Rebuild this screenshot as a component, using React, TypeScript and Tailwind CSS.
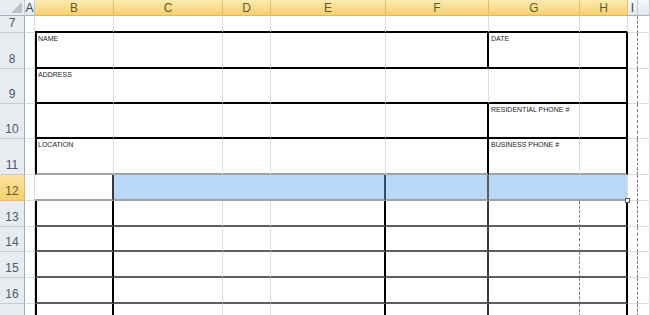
import React from "react";

const R_THIN = "border-r border-r-[#dadcdd]";
const R_THICK = "border-r-2 border-r-black";
const R_DARK = "border-r-2 border-r-[#3a3a3a]";
const R_BLUEDARK = "border-r-2 border-r-[#2f4d6e]";
const R_GRAYDARK = "border-r-2 border-r-[#5a6068]";
const R_DASH = "border-r border-r-[#7a7a7a] [border-right-style:dashed]";
const B_THIN = "border-b border-b-[#dadcdd]";
const B_THICK = "border-b-2 border-b-black";
const B_GRAY = "border-b-2 border-b-[#a2a2a2]";
const B_MED = "border-b-2 border-b-[#5e5e5e]";
const L_THICK = "border-l-2 border-l-black";
const SEL = "bg-[#bad8f8]";

type Cell = { r?: string; b?: string; l?: string; bg?: string; label?: string; pad?: string; handle?: boolean };

const COLS = ["A", "B", "C", "D", "E", "F", "G", "H", "I", "J"];

function makeRow(overrides: Record<string, Cell>): Cell[] {
  return COLS.map((c) => {
    const base: Cell = { r: R_THIN, b: B_THIN };
    if (c === "I") base.r = R_DASH;
    return { ...base, ...(overrides[c] || {}) };
  });
}

const boxB = (b: string) => ({ B: { b }, C: { b }, D: { b }, E: { b }, F: { b }, G: { b }, H: { b } });

function merge(a: Record<string, Cell>, b: Record<string, Cell>) {
  const out: Record<string, Cell> = { ...a };
  Object.keys(b).forEach((k) => {
    out[k] = { ...(out[k] || {}), ...b[k] };
  });
  return out;
}

const rows: { n: number; sel?: boolean; cells: Cell[] }[] = [
  { n: 7, cells: makeRow(boxB(B_THICK)) },
  {
    n: 8,
    cells: makeRow(
      merge(boxB(B_THICK), {
        B: { l: L_THICK, label: "NAME", pad: "pl-[1px]" },
        F: { r: R_THICK },
        G: { label: "DATE", pad: "pl-[2px]" },
        H: { r: R_THICK },
      })
    ),
  },
  {
    n: 9,
    cells: makeRow(
      merge(boxB(B_THICK), {
        B: { l: L_THICK, label: "ADDRESS", pad: "pl-[1px]" },
        H: { r: R_THICK },
      })
    ),
  },
  {
    n: 10,
    cells: makeRow(
      merge(boxB(B_THICK), {
        B: { l: L_THICK },
        F: { r: R_THICK },
        G: { label: "RESIDENTIAL PHONE #", pad: "pl-[2px]" },
        H: { r: R_THICK },
      })
    ),
  },
  {
    n: 11,
    cells: makeRow(
      merge(boxB(B_GRAY), {
        B: { l: L_THICK, label: "LOCATION", pad: "pl-[1px]" },
        F: { r: R_THICK },
        G: { label: "BUSINESS PHONE #", pad: "pl-[2px]" },
        H: { r: R_THICK },
      })
    ),
  },
  {
    n: 12,
    sel: true,
    cells: makeRow(
      merge(boxB(B_GRAY), {
        B: { r: R_DARK },
        C: { bg: SEL, r: "" },
        D: { bg: SEL, r: "" },
        E: { bg: SEL, r: R_BLUEDARK },
        F: { bg: SEL, r: R_GRAYDARK },
        G: { bg: SEL, r: "" },
        H: { bg: SEL, handle: true },
      })
    ),
  },
  ...[13, 14, 15, 16, 17].map((n) => ({
    n,
    cells: makeRow(
      merge(boxB(B_MED), {
        B: { l: L_THICK, r: R_THICK },
        E: { r: R_THICK },
        F: { r: R_DARK },
        G: { r: R_DASH },
        H: { r: R_THICK },
      })
    ),
  })),
];

const HDR_SEL =
  "bg-linear-to-b from-[#fcebb0] to-[#f6d06f] border-r border-r-[#e4bd66] border-b border-b-[#eab54a] text-[#67592a]";
const HDR =
  "bg-linear-to-b from-[#f7f9fb] to-[#e2e7ee] border-r border-r-[#c3cad4] border-b border-b-[#a7b1bf] text-[#3d4759]";

export default function App() {
  const headers: { t: string; sel: boolean }[] = [
    { t: "A", sel: false },
    { t: "B", sel: true },
    { t: "C", sel: true },
    { t: "D", sel: true },
    { t: "E", sel: true },
    { t: "F", sel: true },
    { t: "G", sel: true },
    { t: "H", sel: true },
    { t: "I", sel: false },
    { t: "", sel: false },
  ];
  return (
    <div
      className="w-[650px] h-[315px] overflow-hidden bg-white"
      style={{ fontFamily: '"Liberation Sans", Arial, sans-serif' }}
    >
      <div className="grid grid-cols-[25px_10px_79px_109px_48px_115px_103px_91px_48px_10px_12px] grid-rows-[16px_17px_36px_35px_35px_36px_26px_26px_25px_26px_26px_26px]">
        <div className="relative bg-[#e9edf2] border-r border-r-[#c3cad4] border-b border-b-[#a7b1bf]">
          <div className="absolute right-[2px] bottom-[2px] w-0 h-0 border-l-[11px] border-l-transparent border-b-[11px] border-b-[#b9c0ca]" />
        </div>
        {headers.map((h, i) => (
          <div
            key={i}
            className={`flex items-center justify-center text-[12px] leading-none ${h.sel ? HDR_SEL : HDR}`}
          >
            {h.t}
          </div>
        ))}
        {rows.map((row) => (
          <React.Fragment key={row.n}>
            <div
              className={
                row.sel
                  ? "flex items-end justify-center pb-[3px] text-[12px] leading-none bg-linear-to-b from-[#fbe29d] to-[#f7d06c] text-[#67592a] border-r border-r-[#e0b65a] border-b border-b-[#e6bd63]"
                  : "flex items-end justify-center pb-[3px] text-[12px] leading-none bg-[#e8ecf1] text-[#4a586c] border-r border-r-[#9eabbd] border-b border-b-[#c6ccd6]"
              }
            >
              {row.n}
            </div>
            {row.cells.map((c, i) => (
              <div
                key={i}
                className={`relative ${c.r ?? ""} ${c.b ?? ""} ${c.l ?? ""} ${c.bg ?? ""} ${c.pad ?? ""}`}
              >
                {c.label && (
                  <div className="pt-[2px] text-[7px] leading-[8px] whitespace-nowrap text-[#1c1c1c]">
                    {c.label}
                  </div>
                )}
                {c.handle && (
                  <div className="absolute right-[-3px] bottom-[-4px] w-[5px] h-[5px] bg-white border border-[#555] z-10" />
                )}
              </div>
            ))}
          </React.Fragment>
        ))}
      </div>
    </div>
  );
}
